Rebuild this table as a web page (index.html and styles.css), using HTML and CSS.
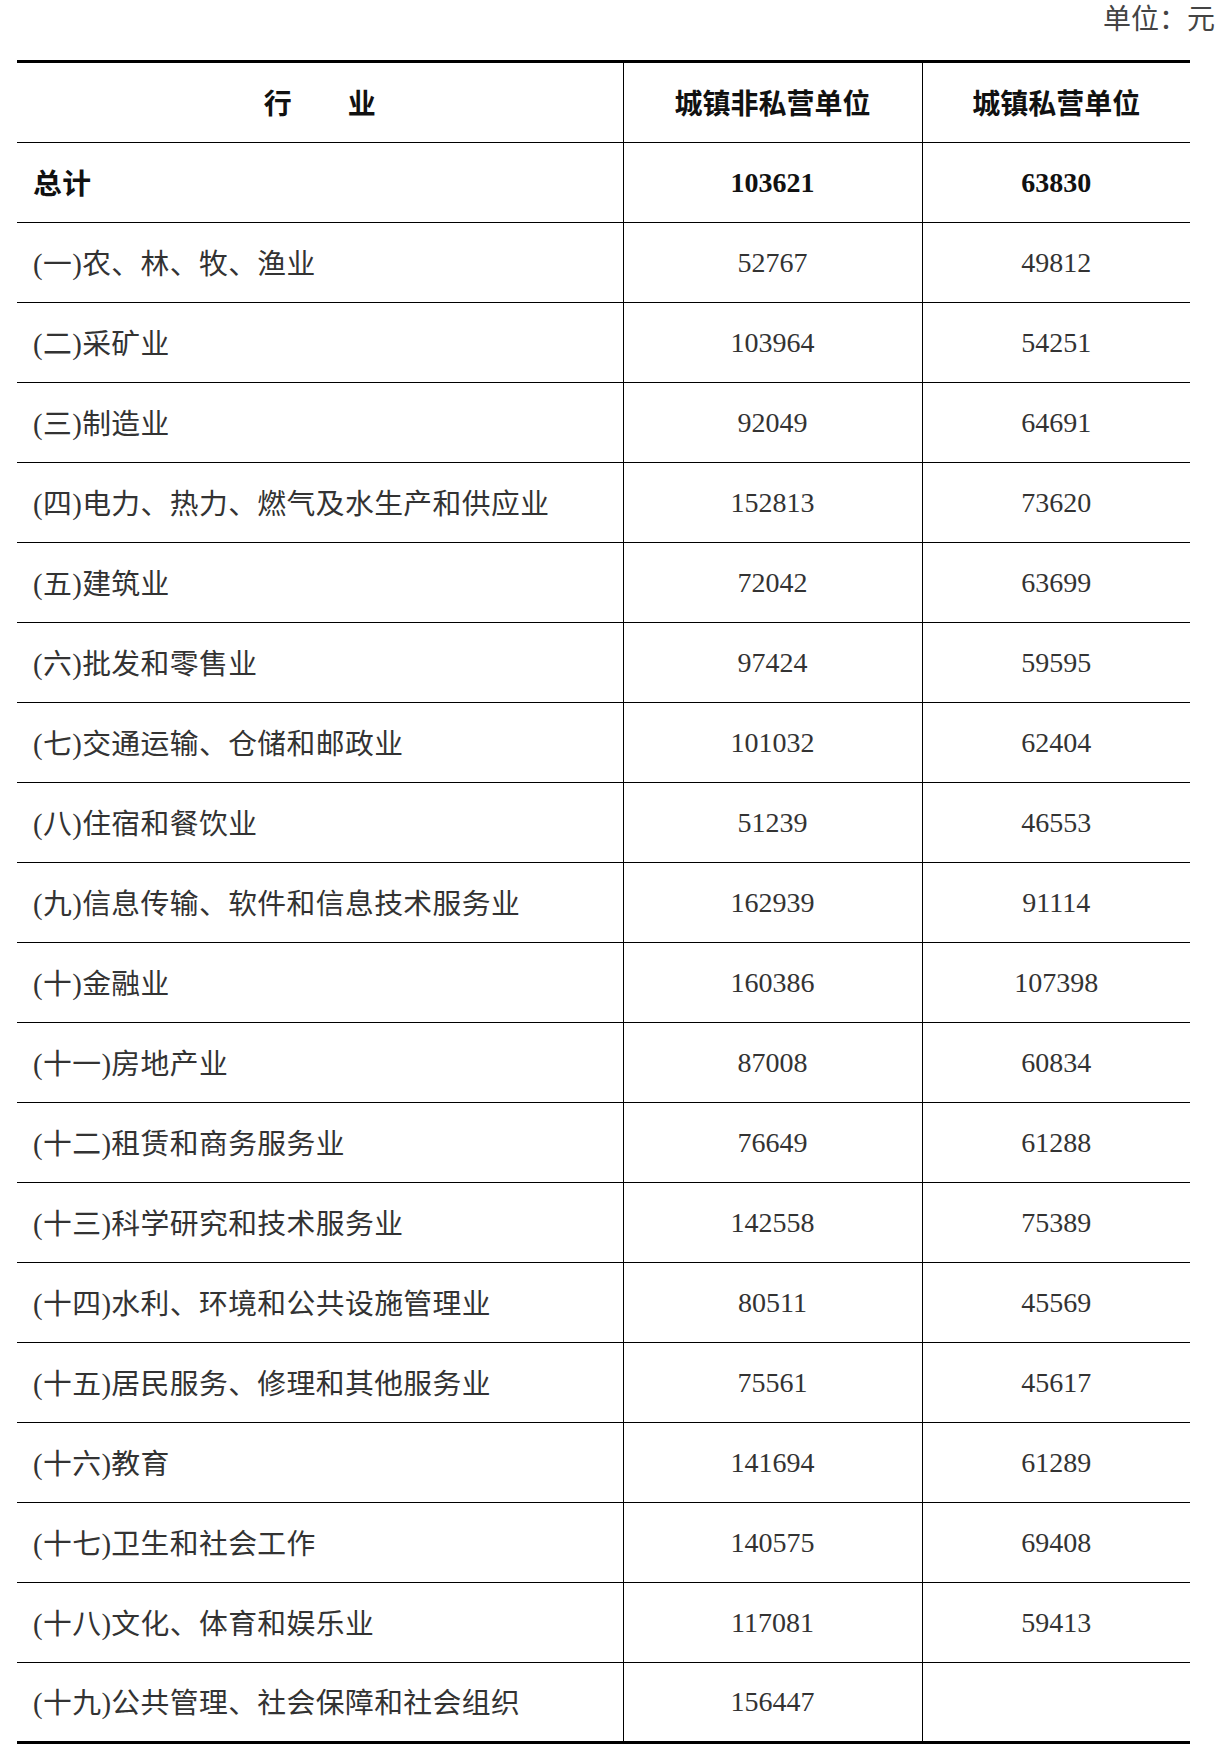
FILE: index.html
```html
<!DOCTYPE html>
<html lang="zh-CN">
<head>
<meta charset="utf-8">
<title>城镇单位平均工资</title>
<link rel="stylesheet" href="styles.css">
</head>
<body>
<div class="page">
  <div class="unit">单位：元</div>
  <table class="data">
    <colgroup>
      <col class="c-name">
      <col class="c-a">
      <col class="c-b">
    </colgroup>
    <thead>
      <tr class="head">
        <th class="name-h">行　　业</th>
        <th>城镇非私营单位</th>
        <th>城镇私营单位</th>
      </tr>
    </thead>
    <tbody>
      <tr class="total"><td class="name">总计</td><td class="num">103621</td><td class="num">63830</td></tr>
      <tr><td class="name">(一)农、林、牧、渔业</td><td class="num">52767</td><td class="num">49812</td></tr>
      <tr><td class="name">(二)采矿业</td><td class="num">103964</td><td class="num">54251</td></tr>
      <tr><td class="name">(三)制造业</td><td class="num">92049</td><td class="num">64691</td></tr>
      <tr><td class="name">(四)电力、热力、燃气及水生产和供应业</td><td class="num">152813</td><td class="num">73620</td></tr>
      <tr><td class="name">(五)建筑业</td><td class="num">72042</td><td class="num">63699</td></tr>
      <tr><td class="name">(六)批发和零售业</td><td class="num">97424</td><td class="num">59595</td></tr>
      <tr><td class="name">(七)交通运输、仓储和邮政业</td><td class="num">101032</td><td class="num">62404</td></tr>
      <tr><td class="name">(八)住宿和餐饮业</td><td class="num">51239</td><td class="num">46553</td></tr>
      <tr><td class="name">(九)信息传输、软件和信息技术服务业</td><td class="num">162939</td><td class="num">91114</td></tr>
      <tr><td class="name">(十)金融业</td><td class="num">160386</td><td class="num">107398</td></tr>
      <tr><td class="name">(十一)房地产业</td><td class="num">87008</td><td class="num">60834</td></tr>
      <tr><td class="name">(十二)租赁和商务服务业</td><td class="num">76649</td><td class="num">61288</td></tr>
      <tr><td class="name">(十三)科学研究和技术服务业</td><td class="num">142558</td><td class="num">75389</td></tr>
      <tr><td class="name">(十四)水利、环境和公共设施管理业</td><td class="num">80511</td><td class="num">45569</td></tr>
      <tr><td class="name">(十五)居民服务、修理和其他服务业</td><td class="num">75561</td><td class="num">45617</td></tr>
      <tr><td class="name">(十六)教育</td><td class="num">141694</td><td class="num">61289</td></tr>
      <tr><td class="name">(十七)卫生和社会工作</td><td class="num">140575</td><td class="num">69408</td></tr>
      <tr><td class="name">(十八)文化、体育和娱乐业</td><td class="num">117081</td><td class="num">59413</td></tr>
      <tr class="last"><td class="name">(十九)公共管理、社会保障和社会组织</td><td class="num">156447</td><td class="num"></td></tr>
    </tbody>
  </table>
</div>
</body>
</html>
```
FILE: styles.css
```css
html, body {
  margin: 0;
  padding: 0;
  background: #ffffff;
}

.page {
  width: 1223px;
  font-family: "Liberation Serif", "Noto Sans CJK SC", serif;
  color: #333333;
}

.unit {
  text-align: right;
  font-size: 28px;
  line-height: 40px;
  height: 60px;
  padding-right: 8px;
  box-sizing: border-box;
  color: #444444;
}

.data {
  margin-left: 17px;
  width: 1173px;
  border-collapse: collapse;
  table-layout: fixed;
  font-size: 28px;
  border-top: 3px solid #000;
  border-bottom: 3px solid #000;
}

.c-name { width: 606px; }
.c-a { width: 299px; }
.c-b { width: 268px; }

.data th,
.data td {
  height: 80px;
  padding: 0;
  border-bottom: 1px solid #000;
  border-left: 1px solid #000;
  vertical-align: middle;
  text-align: center;
  box-sizing: border-box;
}

.data th:first-child,
.data td:first-child {
  border-left: none;
}

.head th {
  height: 81px;
  padding-bottom: 2px;
  font-weight: bold;
  color: #111;
}

.data td.name {
  text-align: left;
  padding-left: 16px;
  padding-bottom: 3px;
  font-size: 28.8px;
  letter-spacing: 0.4px;
}

.total td {
  font-weight: bold;
  color: #111;
}

.last td {
  border-bottom: none;
}
```
